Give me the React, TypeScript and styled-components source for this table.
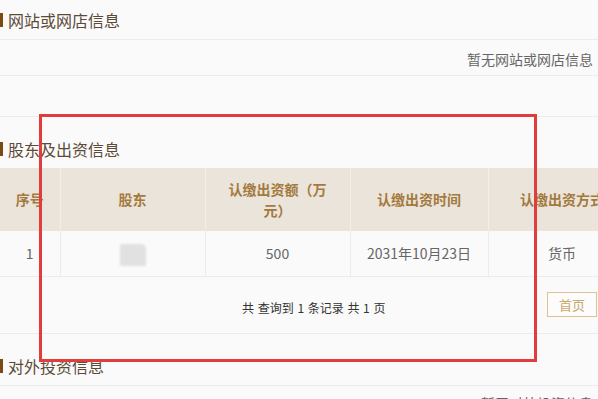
import React from 'react';
import styled, { createGlobalStyle } from 'styled-components';

const GlobalStyle = createGlobalStyle`
  html, body {
    margin: 0;
    padding: 0;
    background: #fafafa;
    overflow: hidden;
  }
  body {
    font-family: "Noto Sans CJK SC", "Noto Sans", sans-serif;
  }
`;

const Page = styled.div`
  position: relative;
  width: 598px;
  height: 399px;
  overflow: hidden;
  background: #fafafa;
`;

const SectionTitle = styled.div<{ $height: number; $lined?: boolean }>`
  box-sizing: border-box;
  height: ${(p) => p.$height}px;
  display: flex;
  align-items: flex-end;
  gap: 5px;
  padding-bottom: 11px;
  font-size: 16px;
  line-height: 16px;
  color: #5c4a37;
  border-bottom: ${(p) => (p.$lined ? '1px solid #ebebeb' : 'none')};
  &::before {
    content: '';
    display: block;
    width: 3px;
    height: 14px;
    margin-bottom: 1px;
    background: #7a4b10;
  }
`;

const InfoRow = styled.div<{ $height?: number }>`
  box-sizing: border-box;
  height: ${(p) => p.$height ?? 36}px;
  display: flex;
  align-items: center;
  justify-content: flex-end;
  padding: 2px 5px 0 0;
  font-size: 14px;
  color: #666;
  border-bottom: 1px solid #ebebeb;
`;

const TableWrap = styled.div`
  width: 636px;
`;

const Table = styled.table`
  width: 636px;
  table-layout: fixed;
  border-collapse: collapse;
`;

const HeadCell = styled.th<{ $width: number; $pad: number }>`
  box-sizing: border-box;
  width: ${(p) => p.$width}px;
  height: 63px;
  padding: 0 ${(p) => p.$pad}px;
  background: #ebe4da;
  color: #a37a3e;
  font-size: 14px;
  font-weight: bold;
  line-height: 21px;
  text-align: center;
  border-right: 1px solid #f3eee7;
`;

const Cell = styled.td`
  box-sizing: border-box;
  height: 45px;
  padding: 0 10px;
  font-size: 14px;
  color: #666;
  text-align: center;
  border-right: 1px solid #ececec;
  border-bottom: 1px solid #ebebeb;
`;

const Masked = styled.span`
  display: inline-block;
  width: 26px;
  height: 22px;
  margin-top: 4px;
  border-radius: 1px 5px 1px 1px;
  background: #e1e1e1;
  filter: blur(0.8px);
  vertical-align: middle;
`;

const Pager = styled.div`
  box-sizing: border-box;
  height: 57px;
  display: flex;
  align-items: center;
  padding: 0 1px 0 242px;
  border-bottom: 1px solid #ebebeb;
`;

const PagerInfo = styled.span`
  margin-top: 6px;
  font-size: 12px;
  color: #333;
  word-spacing: 1px;
`;

const PageButton = styled.button`
  box-sizing: border-box;
  width: 50px;
  height: 25px;
  margin-left: auto;
  padding: 0;
  border: 1px solid #dcc492;
  background: #fcfcfc;
  color: #c9a86d;
  font-family: inherit;
  font-size: 13px;
`;

const Annotation = styled.div`
  position: absolute;
  left: 39px;
  top: 114px;
  width: 498px;
  height: 248px;
  box-sizing: border-box;
  border: 3px solid #e33c3c;
  pointer-events: none;
`;

const columns = [
  { label: '序号', width: 60, pad: 4 },
  { label: '股东', width: 145, pad: 16 },
  { label: '认缴出资额（万元）', width: 145, pad: 16 },
  { label: '认缴出资时间', width: 138, pad: 16 },
  { label: '认缴出资方式', width: 148, pad: 16 },
];

export default function App() {
  return (
    <Page>
      <GlobalStyle />
      <SectionTitle $height={40} $lined>网站或网店信息</SectionTitle>
      <InfoRow>暂无网站或网店信息</InfoRow>
      <InfoRow $height={41} />

      <SectionTitle $height={51}>股东及出资信息</SectionTitle>
      <TableWrap>
        <Table>
          <thead>
            <tr>
              {columns.map((c) => (
                <HeadCell key={c.label} $width={c.width} $pad={c.pad}>
                  {c.label}
                </HeadCell>
              ))}
            </tr>
          </thead>
          <tbody>
            <tr>
              <Cell>1</Cell>
              <Cell>
                <Masked />
              </Cell>
              <Cell>500</Cell>
              <Cell>2031年10月23日</Cell>
              <Cell>货币</Cell>
            </tr>
          </tbody>
        </Table>
      </TableWrap>
      <Pager>
        <PagerInfo>共 查询到 1 条记录 共 1 页</PagerInfo>
        <PageButton>首页</PageButton>
      </Pager>

      <SectionTitle $height={52} $lined>对外投资信息</SectionTitle>
      <InfoRow $height={34}>暂无对外投资信息</InfoRow>

      <Annotation />
    </Page>
  );
}
